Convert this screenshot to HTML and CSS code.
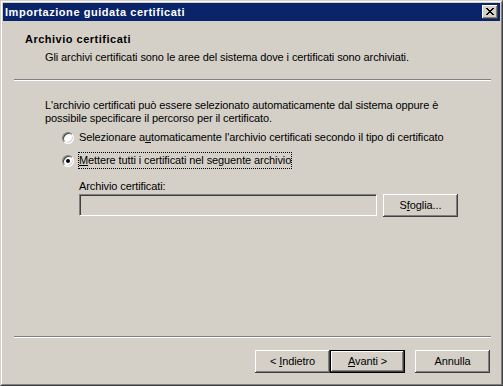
FILE: index.html
```html
<!DOCTYPE html>
<html lang="it">
<head>
	<meta charset="UTF-8">
	<meta name="viewport" content="width=device-width, initial-scale=1.0">
	<title>Importazione guidata certificati</title>
	<link rel="stylesheet" href="styles.css">
</head>
<body>
	<div class="window">
		<div class="frame">
			<div class="titlebar">
				<span class="title">Importazione guidata certificati</span>
				<button class="close" aria-label="Chiudi">
					<svg width="8" height="7" viewBox="0 0 8 7" shape-rendering="crispEdges">
						<rect x="0" y="0" width="2" height="1"/><rect x="6" y="0" width="2" height="1"/>
						<rect x="1" y="1" width="2" height="1"/><rect x="5" y="1" width="2" height="1"/>
						<rect x="2" y="2" width="4" height="1"/>
						<rect x="3" y="3" width="2" height="1"/>
						<rect x="2" y="4" width="4" height="1"/>
						<rect x="1" y="5" width="2" height="1"/><rect x="5" y="5" width="2" height="1"/>
						<rect x="0" y="6" width="2" height="1"/><rect x="6" y="6" width="2" height="1"/>
					</svg>
				</button>
			</div>

			<div class="header">
				<div class="header-title">Archivio certificati</div>
				<div class="header-sub">Gli archivi certificati sono le aree del sistema dove i certificati sono archiviati.</div>
			</div>
			<div class="sep"></div>

			<div class="content">
				<p class="intro">L'archivio certificati può essere selezionato automaticamente dal sistema oppure è<br>possibile specificare il percorso per il certificato.</p>

				<div class="radio">
					<span class="dot"></span>
					<span class="radio-text">Selezionare a<u>u</u>tomaticamente l'archivio certificati secondo il tipo di certificato</span>
				</div>
				<div class="radio checked">
					<span class="dot"></span>
					<span class="radio-text focus"><u>M</u>ettere tutti i certificati nel seguente archivio</span>
				</div>

				<div class="store">
					<div class="store-label">Archivio certificati:</div>
					<div class="store-row">
						<div class="textbox"></div>
						<button class="btn">S<u>f</u>oglia...</button>
					</div>
				</div>
			</div>

			<div class="sep"></div>
			<div class="footer">
				<button class="btn">&lt; <u>I</u>ndietro</button>
				<button class="btn default"><u>A</u>vanti &gt;</button>
				<button class="btn cancel">Annulla</button>
			</div>
		</div>
	</div>
</body>
</html>
```

FILE: styles.css
```css
* {
	box-sizing: border-box;
}

body {
	margin: 0;
	background: #d4d0c8;
	color: #000;
	font: 11px/13px "Liberation Sans", Arial, sans-serif;
	letter-spacing: -0.1px;
}

/* Window frame - classic 3d border */
.window {
	width: 503px;
	height: 386px;
	border: 1px solid;
	border-color: #d4d0c8 #404040 #404040 #d4d0c8;
}

.frame {
	height: 100%;
	border: 1px solid;
	border-color: #fff #808080 #808080 #fff;
	padding: 1px;
	display: flex;
	flex-direction: column;
}

.titlebar {
	height: 18px;
	background: #0a246a;
	color: #fff;
	font-weight: bold;
	letter-spacing: 0.55px;
	display: flex;
	align-items: center;
	justify-content: space-between;
	padding: 0 2px;
}

.close {
	width: 16px;
	height: 14px;
	padding: 0;
	border: 0;
	background: #d4d0c8;
	box-shadow: inset -1px -1px #404040, inset 1px 1px #fff, inset -2px -2px #808080;
	display: flex;
	align-items: center;
	justify-content: center;
}

.close svg {
	display: block;
	margin: 0 1px 1px 0;
}

/* Header */
.header {
	height: 58px;
	padding: 12px 0 0 22px;
}

.header-title {
	font-weight: bold;
	letter-spacing: 0.5px;
}

.header-sub {
	margin: 5px 0 0 20px;
}

.sep {
	height: 2px;
	margin: 0 9px 0 11px;
	border-top: 1px solid #808080;
	border-bottom: 1px solid #fff;
}

/* Page content */
.content {
	flex: 1;
	padding: 18px 0 0 42px;
}

.intro {
	margin: 0 0 4px;
}

.radio {
	display: flex;
	align-items: center;
	height: 17px;
	padding-left: 17px;
	margin-bottom: 6px;
}

.dot {
	width: 12px;
	height: 12px;
	margin-right: 4px;
	border-radius: 50%;
	background: #fff;
	border: 1px solid;
	border-color: #808080 #fff #fff #808080;
	box-shadow: inset 1px 1px #404040, inset -1px -1px #d4d0c8;
	display: flex;
	align-items: center;
	justify-content: center;
}

.checked .dot:after {
	content: "";
	width: 4px;
	height: 4px;
	border-radius: 50%;
	background: #000;
}

.radio-text {
	padding: 1px 0;
	border: 1px solid transparent;
	white-space: nowrap;
}

.radio-text.focus {
	border: 1px dotted #000;
}

.store {
	padding-left: 34px;
	margin-top: 11px;
}

.store-row {
	display: flex;
	gap: 6px;
	margin-top: 1px;
}

.textbox {
	width: 298px;
	height: 22px;
	background: #d4d0c8;
	border: 1px solid;
	border-color: #808080 #fff #fff #808080;
	box-shadow: inset 1px 1px #404040, inset -1px -1px #d4d0c8;
}

/* Buttons */
.btn {
	width: 75px;
	height: 23px;
	padding: 0 0 1px;
	border: 0;
	background: #d4d0c8;
	color: #000;
	font: inherit;
	letter-spacing: inherit;
	box-shadow: inset -1px -1px #404040, inset 1px 1px #fff, inset -2px -2px #808080;
}

.btn.default {
	border: 1px solid #000;
}

.footer {
	height: 45px;
	padding: 12px 10px 0 0;
	display: flex;
	justify-content: flex-end;
	align-items: flex-start;
}

.btn.cancel {
	margin-left: 10px;
}
```
